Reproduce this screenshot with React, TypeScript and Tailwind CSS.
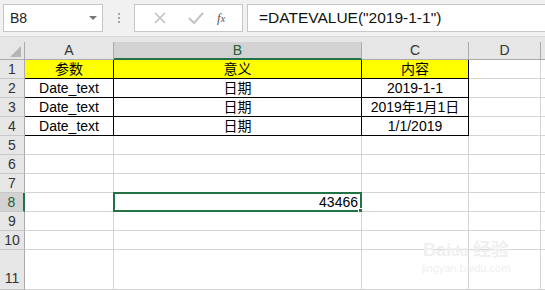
import React from "react"

const font = { fontFamily: '"Liberation Sans", Arial, "Noto Sans CJK SC", sans-serif' }

const cols = [
    { key: "A", w: "w-[89px]" },
    { key: "B", w: "w-[248px]" },
    { key: "C", w: "w-[107px]" },
    { key: "D", w: "w-[72px]" },
]

type RowData = { n: number; h: string; cells?: string[]; table?: boolean; yellow?: boolean }

const rows: RowData[] = [
    { n: 1, h: "h-[19px]", cells: ["参数", "意义", "内容"], table: true, yellow: true },
    { n: 2, h: "h-[19px]", cells: ["Date_text", "日期", "2019-1-1"], table: true },
    { n: 3, h: "h-[19px]", cells: ["Date_text", "日期", "2019年1月1日"], table: true },
    { n: 4, h: "h-[19px]", cells: ["Date_text", "日期", "1/1/2019"], table: true },
    { n: 5, h: "h-[19px]" },
    { n: 6, h: "h-[19px]" },
    { n: 7, h: "h-[19px]" },
    { n: 8, h: "h-[19px]" },
    { n: 9, h: "h-[19px]" },
    { n: 10, h: "h-[19px]" },
    { n: 11, h: "h-[40px]" },
]

function Toolbar() {
    return (
        <div className="flex h-[37px] items-start bg-[#f1f1f1] pt-[4px] border-b border-[#dadada]">
            <div className="ml-[3px] flex h-[28px] w-[100px] items-center justify-between border border-[#c6c6c6] bg-white pl-[6px] pr-[5px] text-[14px] text-[#222]">
                <span>B8</span>
                <span className="h-0 w-0 border-x-[4px] border-t-[4px] border-x-transparent border-t-[#777]" />
            </div>
            <div className="flex h-[28px] w-[31px] flex-col items-center justify-center gap-[2px]">
                <span className="h-[2px] w-[2px] bg-[#a6a6a6]" />
                <span className="h-[2px] w-[2px] bg-[#a6a6a6]" />
                <span className="h-[2px] w-[2px] bg-[#a6a6a6]" />
            </div>
            <div className="flex h-[28px] w-[109px] items-center border border-[#c6c6c6] bg-white">
                <svg width="36" height="26" viewBox="0 0 36 26" className="ml-[7px]">
                    <path d="M13 8 L23 18 M23 8 L13 18" stroke="#c2c2c2" strokeWidth="1.6" fill="none" />
                </svg>
                <svg width="36" height="26" viewBox="0 0 36 26">
                    <path d="M11 13 L16 18 L25 8" stroke="#c2c2c2" strokeWidth="2" fill="none" />
                </svg>
                <span className="ml-[3px] text-[13px] italic text-[#555]" style={{ fontFamily: '"Liberation Serif", serif' }}>
                    f<span className="text-[10px]">x</span>
                </span>
            </div>
            <div className="ml-[4px] flex h-[28px] flex-1 items-center border border-r-0 border-[#c6c6c6] bg-white pl-[11px] text-[15.5px] text-[#111]">
                =DATEVALUE("2019-1-1")
            </div>
        </div>
    )
}

function HeaderRow() {
    return (
        <div className="flex h-[18px] bg-[#e6e6e6]">
            <div className="relative w-[25px] border-r border-b border-[#ababab]">
                <svg width="11" height="11" viewBox="0 0 11 11" className="absolute bottom-[2px] right-[3px]">
                    <path d="M11 0 L11 11 L0 11 Z" fill="#b5b5b5" />
                </svg>
            </div>
            {cols.map((c) => (
                <div
                    key={c.key}
                    className={
                        c.w +
                        " flex items-center justify-center border-r border-[#ababab] text-[14px] " +
                        (c.key === "B"
                            ? "bg-[#d2d2d2] border-b-2 border-b-[#217346] text-[#1d5e3a]"
                            : "border-b border-b-[#ababab] text-[#333]")
                    }
                >
                    {c.key}
                </div>
            ))}
            <div className="flex-1 border-b border-[#ababab]" />
        </div>
    )
}

function Row({ r }: { r: RowData }) {
    const active = r.n === 8
    return (
        <div className={"flex " + r.h}>
            <div
                className={
                    "flex w-[25px] justify-center border-b border-[#c8c8c8] text-[14px] " +
                    (r.n === 11 ? "items-end " : "items-center ") +
                    (active
                        ? "bg-[#d2d2d2] border-r-2 border-r-[#217346] text-[#1d5e3a]"
                        : "bg-[#e6e6e6] border-r border-r-[#ababab] text-[#333]")
                }
            >
                {r.n}
            </div>
            {cols.map((c, i) => {
                const inTable = r.table && i < 3
                const text = r.cells ? r.cells[i] : undefined
                const isB8 = active && c.key === "B"
                return (
                    <div
                        key={c.key}
                        className={
                            c.w +
                            " relative flex items-center text-[14px] text-black border-b border-r " +
                            (inTable ? "border-b-black border-r-black " : "border-b-[#d4d4d4] border-r-[#d4d4d4] ") +
                            (r.yellow && i < 3 ? "bg-[#ffff00] " : "bg-white ") +
                            (isB8 ? "justify-end pr-[3px]" : "justify-center")
                        }
                    >
                        {text}
                        {isB8 && (
                            <>
                                <span>43466</span>
                                <div className="absolute -left-[1px] -top-[1px] -right-[1px] -bottom-[1px] border-2 border-[#217346]" />
                                <div className="absolute -right-[4px] -bottom-[4px] h-[7px] w-[7px] border border-white bg-[#217346]" />
                            </>
                        )}
                    </div>
                )
            })}
            <div className="flex-1 border-b border-[#d4d4d4] bg-white" />
        </div>
    )
}

export default function App() {
    return (
        <div className="relative h-[290px] w-[545px] overflow-hidden bg-white" style={font}>
            <Toolbar />
            <div className="h-[5px] bg-[#e6e6e6]" />
            <HeaderRow />
            {rows.map((r) => (
                <Row key={r.n} r={r} />
            ))}
            <div className="pointer-events-none absolute left-[416px] top-[240px] flex w-[100px] flex-col items-center text-[#efefef]">
                <div className="text-[18px] font-bold leading-[20px]">
                    Bai<span className="text-[14px]">du</span> 经验
                </div>
                <div className="text-[11px] leading-[14px]">jingyan.baidu.com</div>
            </div>
        </div>
    )
}
